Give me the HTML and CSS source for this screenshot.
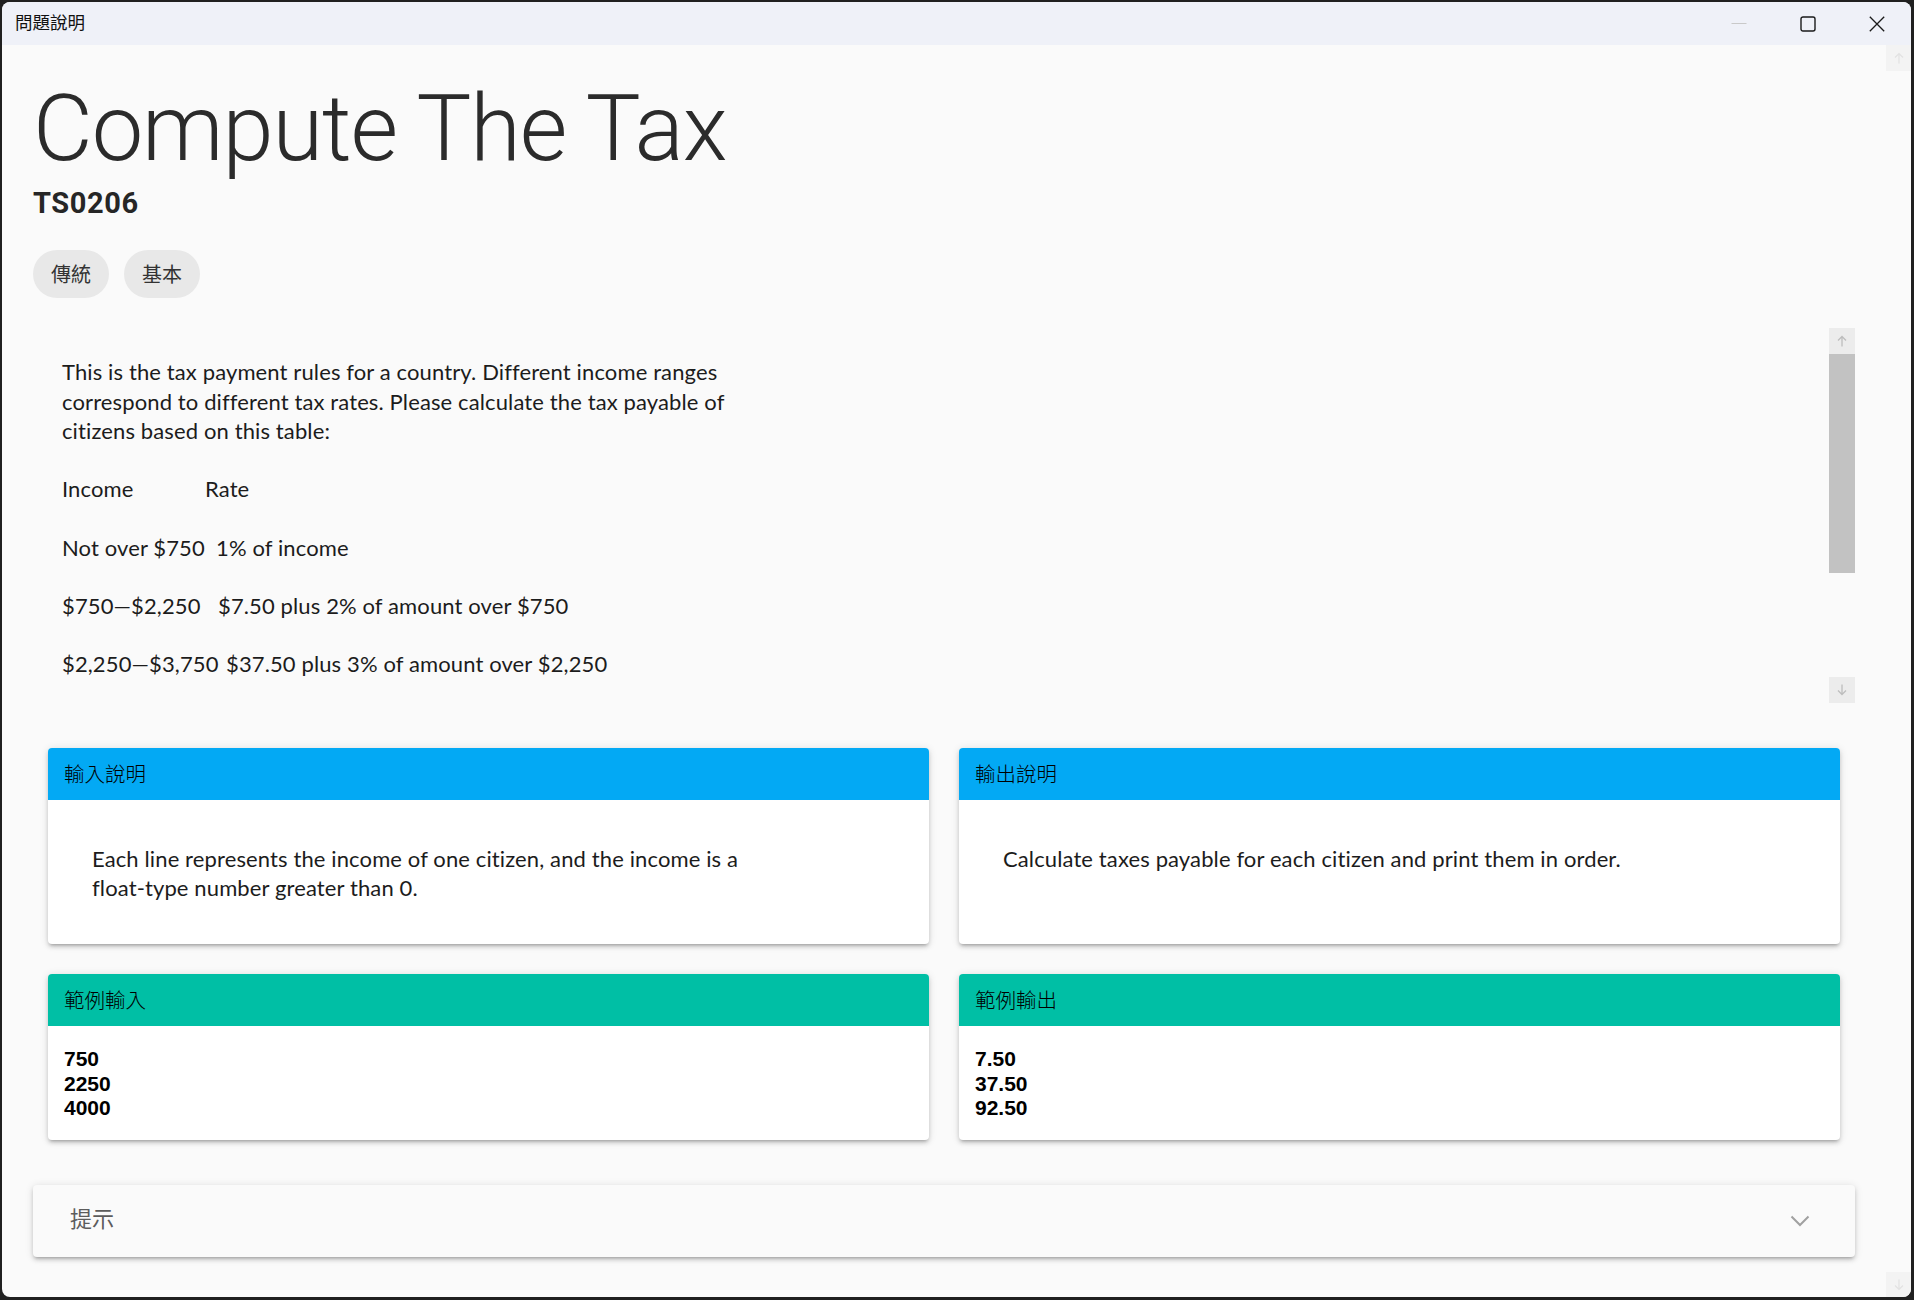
FILE: index.html
```html
<!DOCTYPE html>
<html lang="zh-Hant">
<head>
<meta charset="utf-8">
<title>問題說明</title>
<link rel="stylesheet" href="styles.css">
</head>
<body>
<div class="window">
  <header class="titlebar">
    <div class="win-title">問題說明</div>
    <div class="caption-buttons">
      <div class="cap-btn">
        <svg class="cap-icon" width="16" height="16" viewBox="0 0 16 16"><path d="M0.5 7.5 H15.5" stroke="#c9c9c9" stroke-width="1"/></svg>
      </div>
      <div class="cap-btn">
        <svg class="cap-icon" width="16" height="16" viewBox="0 0 16 16"><rect x="1" y="1" width="14" height="14" rx="2" fill="none" stroke="#1a1a1a" stroke-width="1.4"/></svg>
      </div>
      <div class="cap-btn">
        <svg class="cap-icon" width="16" height="16" viewBox="0 0 16 16"><path d="M0.8 0.8 L15.2 15.2 M15.2 0.8 L0.8 15.2" stroke="#1a1a1a" stroke-width="1.3" fill="none"/></svg>
      </div>
    </div>
  </header>
  <div class="client">
    <main class="page">
      <h1 class="problem-title">Compute The Tax</h1>
      <div class="problem-id">TS0206</div>
      <div class="tags">
        <span class="chip">傳統</span>
        <span class="chip">基本</span>
      </div>

      <section class="desc">
        <div class="desc-text">
          <p>This is the tax payment rules for a country. Different income ranges<br>correspond to different tax rates. Please calculate the tax payable of<br>citizens based on this table:</p>
          <p><span class="col1 w-head">Income</span><span>Rate</span></p>
          <p><span class="col1 w-r1">Not over $750</span><span>1% of income</span></p>
          <p><span class="col1 w-r2">$750—$2,250</span><span>$7.50 plus 2% of amount over $750</span></p>
          <p><span class="col1 w-r3">$2,250—$3,750</span><span>$37.50 plus 3% of amount over $2,250</span></p>
        </div>
        <div class="inner-bar">
          <div class="sb-btn inner-btn">
            <svg width="10" height="12" viewBox="0 0 10 12"><path d="M5 11.5 V1.5 M1 5.5 L5 1.5 L9 5.5" fill="none" stroke="#bdbdbd" stroke-width="1.3"/></svg>
          </div>
          <div class="sb-thumb"></div>
          <div class="sb-track"></div>
          <div class="sb-btn inner-btn">
            <svg width="10" height="12" viewBox="0 0 10 12"><path d="M5 0.5 V10.5 M1 6.5 L5 10.5 L9 6.5" fill="none" stroke="#bdbdbd" stroke-width="1.3"/></svg>
          </div>
        </div>
      </section>

      <div class="cards">
        <div class="card">
          <div class="card-head head-blue">輸入說明</div>
          <div class="card-body body-text">Each line represents the income of one citizen, and the income is a<br>float-type number greater than 0.</div>
        </div>
        <div class="card">
          <div class="card-head head-blue">輸出說明</div>
          <div class="card-body body-text">Calculate taxes payable for each citizen and print them in order.</div>
        </div>
        <div class="card">
          <div class="card-head head-teal">範例輸入</div>
          <pre class="card-body body-sample">750
2250
4000</pre>
        </div>
        <div class="card">
          <div class="card-head head-teal">範例輸出</div>
          <pre class="card-body body-sample">7.50
37.50
92.50</pre>
        </div>
      </div>

      <div class="hint">
        <span class="hint-label">提示</span>
        <svg class="chevron" width="20" height="12" viewBox="0 0 20 12"><path d="M1.5 1.5 L10 10 L18.5 1.5" fill="none" stroke="#a0a0a0" stroke-width="2"/></svg>
      </div>
    </main>
    <div class="outer-bar">
      <div class="sb-btn outer-btn outer-up">
        <svg width="10" height="12" viewBox="0 0 10 12"><path d="M5 11.5 V1.5 M1 5.5 L5 1.5 L9 5.5" fill="none" stroke="#e2e2e2" stroke-width="1.2"/></svg>
      </div>
      <div class="sb-btn outer-btn outer-down">
        <svg width="10" height="12" viewBox="0 0 10 12"><path d="M5 0.5 V10.5 M1 6.5 L5 10.5 L9 6.5" fill="none" stroke="#e2e2e2" stroke-width="1.2"/></svg>
      </div>
    </div>
  </div>
</div>
</body>
</html>
```

FILE: styles.css
```css
html, body {
  margin: 0;
  padding: 0;
}

body {
  width: 1914px;
  height: 1300px;
  overflow: hidden;
  background: #202020;
}

.window {
  margin: 2px 3px 3px 2px;
  height: 1295px;
  border-radius: 8px;
  overflow: hidden;
  background: #fafafa;
  display: flex;
  flex-direction: column;
}

/* ---------- title bar ---------- */
.titlebar {
  flex: none;
  height: 43px;
  background: #eff1f8;
  display: flex;
  align-items: center;
  justify-content: space-between;
  padding-left: 13px;
}

.win-title {
  font-family: "Noto Sans CJK TC", sans-serif;
  font-size: 17.5px;
  color: #111;
  line-height: 1;
  padding-bottom: 4px;
}

.caption-buttons {
  display: flex;
  align-self: stretch;
}

.cap-btn {
  width: 69px;
  display: flex;
  align-items: center;
  justify-content: center;
}

.cap-icon {
  display: block;
}

/* ---------- client ---------- */
.client {
  flex: 1;
  display: flex;
  min-height: 0;
}

.page {
  flex: 1;
  min-width: 0;
  padding: 38px 31px 0 31px;
}

.problem-title {
  margin: 0;
  font-family: Roboto, sans-serif;
  font-weight: 300;
  font-size: 92px;
  line-height: 92px;
  letter-spacing: -1.1px;
  color: #2b2b2b;
}

.problem-id {
  margin-top: 12px;
  font-family: Roboto, sans-serif;
  font-weight: 700;
  font-size: 29px;
  line-height: 32px;
  letter-spacing: 0.6px;
  color: #262626;
}

.tags {
  margin-top: 31px;
  display: flex;
  gap: 15px;
}

.chip {
  height: 48px;
  line-height: 48px;
  padding: 0 18px;
  border-radius: 24px;
  background: #e8e8e8;
  font-family: "Noto Sans CJK TC", sans-serif;
  font-size: 20px;
  color: #333;
}

/* ---------- description ---------- */
.desc {
  margin-top: 30px;
  height: 375px;
  display: flex;
}

.desc-text {
  flex: 1;
  overflow: hidden;
  padding: 29.4px 29px 0 29px;
  font-family: Lato, "Noto Sans", sans-serif;
  font-size: 22px;
  letter-spacing: 0.12px;
  line-height: 29.2px;
  color: #1c1c1c;
}

.desc-text p {
  margin: 0 0 29.2px 0;
  white-space: nowrap;
}

.col1 {
  display: inline-block;
}

.w-head { width: 143px; }
.w-r1 { width: 154px; }
.w-r2 { width: 156px; }
.w-r3 { width: 164px; }

.inner-bar {
  width: 26px;
  display: flex;
  flex-direction: column;
}

.sb-btn {
  display: flex;
  align-items: center;
  justify-content: center;
}

.inner-btn {
  height: 26px;
  background: #ececec;
}

.sb-thumb {
  height: 219px;
  background: #c2c2c2;
}

.sb-track {
  flex: 1;
}

/* ---------- cards ---------- */
.cards {
  margin: 45px 15px 0 15px;
  display: grid;
  grid-template-columns: 1fr 1fr;
  gap: 30px;
}

.card {
  background: #fff;
  border-radius: 4px;
  overflow: hidden;
  display: flex;
  flex-direction: column;
  box-shadow: 0 3px 3px -2px rgba(0,0,0,.2), 0 3px 4px 0 rgba(0,0,0,.14), 0 1px 8px 0 rgba(0,0,0,.12);
}

.card-head {
  height: 52px;
  flex: none;
  display: flex;
  align-items: center;
  padding-left: 16px;
  padding-bottom: 2px;
  box-sizing: border-box;
  font-family: "Noto Sans CJK TC", sans-serif;
  font-weight: 300;
  font-size: 20.5px;
  color: #000;
}

.head-blue { background: #03a9f4; }
.head-teal { background: #00bfa5; }

.card-body {
  flex: 1;
  margin: 0;
}

.body-text {
  padding: 44px 44px 42px 44px;
  font-family: Lato, "Noto Sans", sans-serif;
  font-size: 22px;
  letter-spacing: 0.12px;
  line-height: 29.2px;
  color: #1c1c1c;
}

.body-sample {
  padding: 20.75px 16px 19.75px 16px;
  font-family: "Liberation Sans", Arial, sans-serif;
  font-weight: 700;
  font-size: 21px;
  line-height: 24.5px;
  color: #000;
  white-space: pre;
}

/* ---------- hint ---------- */
.hint {
  margin-top: 45px;
  height: 72px;
  display: flex;
  align-items: center;
  justify-content: space-between;
  padding: 0 45px 0 37px;
  background: #fafafa;
  border-radius: 4px;
  box-shadow: 0 3px 3px -2px rgba(0,0,0,.2), 0 3px 4px 0 rgba(0,0,0,.14), 0 1px 8px 0 rgba(0,0,0,.12);
}

.hint-label {
  font-family: "Noto Sans CJK TC", sans-serif;
  font-size: 22px;
  line-height: 1;
  padding-bottom: 8px;
  color: #5c5c5c;
}

.chevron {
  display: block;
}

/* ---------- outer scrollbar ---------- */
.outer-bar {
  width: 25px;
  flex: none;
  display: flex;
  flex-direction: column;
  justify-content: space-between;
}

.outer-btn {
  background: #f3f3f3;
}

.outer-up { height: 26px; }
.outer-down { height: 25px; }
```
